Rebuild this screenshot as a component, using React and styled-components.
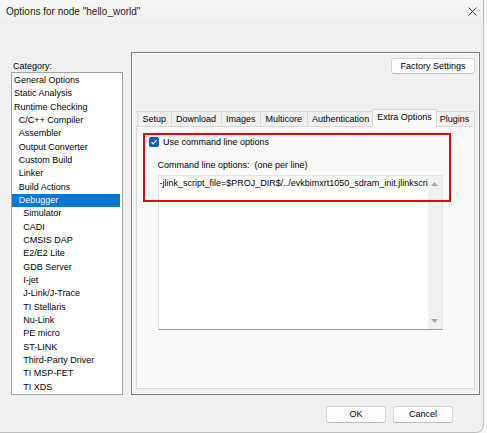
import React from 'react';
import styled, { createGlobalStyle } from 'styled-components';

const GlobalStyle = createGlobalStyle`
  html, body { margin: 0; padding: 0; background: #f8f8f8; }
  body { font-family: "Liberation Sans", Arial, sans-serif; font-size: 9px; color: #000; }
  * { box-sizing: border-box; }
`;

const Window = styled.div`
  width: 484px;
  height: 433px;
  background: #f0f0f0;
  border-right: 1px solid #bdbdbd;
  border-bottom: 1px solid #bdbdbd;
  border-bottom-right-radius: 8px;
  display: flex;
  flex-direction: column;
  overflow: hidden;
`;

const TitleBar = styled.div`
  height: 22px;
  flex: none;
  display: flex;
  align-items: center;
  justify-content: space-between;
  padding: 0 6px 0 6px;
  background: linear-gradient(#f6f6f6, #f1f1f1);
  font-size: 10px;
  color: #1b1b1b;
`;

const Body = styled.div`
  display: flex;
  gap: 8px;
  padding: 30px 0 0 11px;
`;

const LeftCol = styled.div`
  width: 112px;
  display: flex;
  flex-direction: column;
`;

const CategoryLabel = styled.div`
  padding: 8px 0 0 2px;
  height: 20px;
  line-height: 12px;
`;

const List = styled.div`
  height: 323px;
  border: 1px solid #a3a3a3;
  background: #fff;
  padding: 1px 2px 0 0;
  overflow: hidden;
`;

const Item = styled.div`
  height: 13.33px;
  line-height: 13.33px;
  padding-left: ${p => 2 + p.$level * 4.67}px;
  white-space: nowrap;
  background: ${p => (p.$selected ? '#0078d7' : 'transparent')};
  color: ${p => (p.$selected ? '#fff' : '#000')};
`;

const Frame = styled.div`
  width: 349px;
  height: 343px;
  border: 1px solid #7d7d7d;
  box-shadow: inset 0 0 0 1px #fcfcfc;
  padding: 5px 4px 5px 4px;
  display: flex;
  flex-direction: column;
`;

const FactoryRow = styled.div`
  display: flex;
  justify-content: flex-end;
`;

const PushButton = styled.button`
  width: ${p => p.$w}px;
  height: ${p => p.$h}px;
  padding: 0;
  background: #fdfdfd;
  border: 1px solid #d3d3d3;
  border-bottom-color: #bdbdbd;
  border-radius: 3px;
  font: inherit;
  color: #000;
  line-height: 1;
`;

const TabRow = styled.div`
  margin-top: 35px;
  height: 17px;
  display: flex;
  align-items: flex-end;
  padding-left: 2px;
`;

const Tab = styled.div`
  height: ${p => (p.$active ? 18 : 15)}px;
  line-height: 14px;
  padding: 0 4.5px;
  margin: ${p => (p.$active ? '0 -2px -1px -3px' : '0 0 0 -1px')};
  background: ${p => (p.$active ? '#f9f9f9' : '#f0f0f0')};
  border: 1px solid #d9d9d9;
  border-bottom: none;
  position: relative;
  z-index: ${p => (p.$active ? 2 : 1)};
  white-space: nowrap;
`;

const Page = styled.div`
  flex: 1;
  position: relative;
  border: 1px solid #d9d9d9;
  background: #f9f9f9;
  padding: 10px 0 0 12px;
  display: flex;
  flex-direction: column;
`;

const CheckRow = styled.div`
  display: flex;
  align-items: center;
  gap: 4px;
  height: 10px;
  line-height: 10px;
`;

const CheckBox = styled.div`
  width: 10px;
  height: 10px;
  border-radius: 2px;
  background: #005fb8;
  display: flex;
  align-items: center;
  justify-content: center;
`;

const FieldLabel = styled.div`
  margin: 12px 0 0 8.5px;
  line-height: 12px;
  white-space: pre;
`;

const TextBox = styled.div`
  margin: 4px 0 0 8.5px;
  width: 285px;
  height: 155px;
  display: flex;
  background: #fff;
  border: 1px solid #e3e3e3;
  border-bottom-color: #9d9d9d;
`;

const TextContent = styled.div`
  flex: 1;
  min-width: 0;
  overflow: hidden;
  white-space: nowrap;
  padding: 1px 0 0 1px;
  line-height: 12px;
`;

const ScrollBar = styled.div`
  width: 14px;
  flex: none;
  background: #f0f0f0;
  display: flex;
  flex-direction: column;
  justify-content: space-between;
  align-items: center;
  padding: 6px 0;
`;

const Highlight = styled.div`
  position: absolute;
  left: 6px;
  top: 6px;
  width: 308px;
  height: 69px;
  border: 2px solid #e6000f;
  pointer-events: none;
`;

const Footer = styled.div`
  display: flex;
  justify-content: flex-end;
  gap: 7px;
  margin-top: 11px;
  padding-right: 30px;
`;

const items = [
  ['General Options', 0], ['Static Analysis', 0], ['Runtime Checking', 0],
  ['C/C++ Compiler', 1], ['Assembler', 1], ['Output Converter', 1],
  ['Custom Build', 1], ['Linker', 1], ['Build Actions', 1], ['Debugger', 1],
  ['Simulator', 2], ['CADI', 2], ['CMSIS DAP', 2], ['E2/E2 Lite', 2],
  ['GDB Server', 2], ['I-jet', 2], ['J-Link/J-Trace', 2], ['TI Stellaris', 2],
  ['Nu-Link', 2], ['PE micro', 2], ['ST-LINK', 2], ['Third-Party Driver', 2],
  ['TI MSP-FET', 2], ['TI XDS', 2],
];

const tabs = ['Setup', 'Download', 'Images', 'Multicore', 'Authentication', 'Extra Options', 'Plugins'];

const Arrow = ({ down }) => (
  <svg width="7" height="4" viewBox="0 0 7 4">
    <path d={down ? 'M0 0 H7 L3.5 4 Z' : 'M0 4 H7 L3.5 0 Z'} fill="#a6a6a6" />
  </svg>
);

export default function App() {
  return (
    <>
      <GlobalStyle />
      <Window>
        <TitleBar>
          <span>Options for node "hello_world"</span>
          <svg width="9" height="9" viewBox="0 0 9 9">
            <path d="M0.5 0.5 L8.5 8.5 M8.5 0.5 L0.5 8.5" stroke="#222" strokeWidth="0.9" />
          </svg>
        </TitleBar>
        <Body>
          <LeftCol>
            <CategoryLabel>Category:</CategoryLabel>
            <List>
              {items.map(([label, level]) => (
                <Item key={label} $level={level} $selected={label === 'Debugger'}>
                  {label}
                </Item>
              ))}
            </List>
          </LeftCol>
          <Frame>
            <FactoryRow>
              <PushButton $w={84} $h={16}>Factory Settings</PushButton>
            </FactoryRow>
            <TabRow>
              {tabs.map(t => (
                <Tab key={t} $active={t === 'Extra Options'}>{t}</Tab>
              ))}
            </TabRow>
            <Page>
              <CheckRow>
                <CheckBox>
                  <svg width="8" height="8" viewBox="0 0 8 8">
                    <path d="M1.5 4.2 L3.2 5.8 L6.6 2.2" stroke="#fff" strokeWidth="1.2" fill="none" />
                  </svg>
                </CheckBox>
                <span>Use command line options</span>
              </CheckRow>
              <FieldLabel>Command line options:  (one per line)</FieldLabel>
              <TextBox>
                <TextContent>-jlink_script_file=$PROJ_DIR$/../evkbimxrt1050_sdram_init.jlinkscript</TextContent>
                <ScrollBar>
                  <Arrow />
                  <Arrow down />
                </ScrollBar>
              </TextBox>
              <Highlight />
            </Page>
          </Frame>
        </Body>
        <Footer>
          <PushButton $w={60} $h={17}>OK</PushButton>
          <PushButton $w={60} $h={17}>Cancel</PushButton>
        </Footer>
      </Window>
    </>
  );
}
